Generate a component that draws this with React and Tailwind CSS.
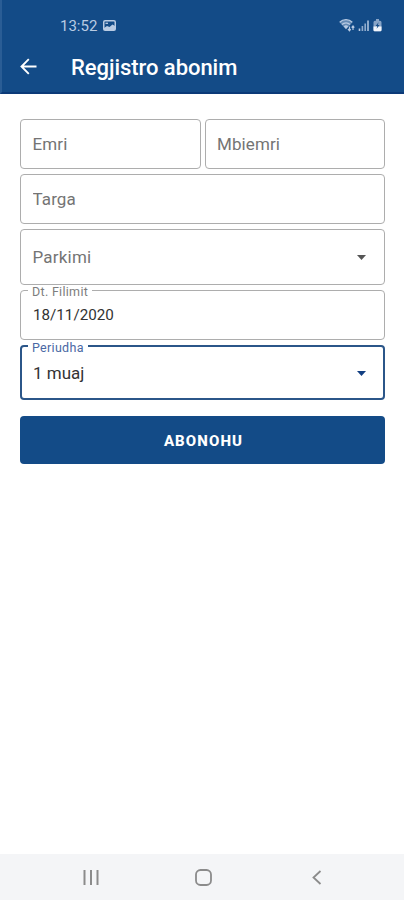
import React, { useState } from "react";

function StatusBar() {
  return (
    <div className="flex h-[42px] items-start justify-between pl-[60px] pr-[20px] pt-[17px] text-[#b9cbe3]">
      <div className="flex items-center gap-[6px]">
        <span className="text-[15px] leading-[18px]">13:52</span>
        <svg className="-mt-px h-[11px] w-[13px]" viewBox="0 0 13 11" fill="none">
          <rect x="0.75" y="0.75" width="11.5" height="9.5" rx="1.3" stroke="currentColor" strokeWidth="1.5" />
          <path d="M1 10V8l3-2 2.5 1L9.5 4.5 12 6v4z" fill="currentColor" />
          <path d="M2.500 3.300h2.500" stroke="currentColor" strokeWidth="1.300" />
        </svg>
      </div>

      {/* Wifi, signal and battery */}
      <svg className="mt-px h-[14px] w-[46px]" viewBox="0 0 46 14" fill="none">
        <path d="M1.5 4.2a9 9 0 0 1 13 0L8 11.5z" fill="currentColor" opacity="0.5" />
        <path d="M1.7 4.2a8.9 8.9 0 0 1 12.6 0" stroke="currentColor" strokeWidth="1.3" />
        <path d="M4 6.5a5.6 5.6 0 0 1 8 0" stroke="currentColor" strokeWidth="1.2" />
        <path d="M5.7 8.3a3.5 3.5 0 0 1 4.6 0L8 11z" fill="currentColor" />
        <path d="M11.5 8.5v4M10 11l1.5 1.7 1.2-1.5M15 12V8.3M13.6 9.7 15 8l1.3 1.7" stroke="currentColor" strokeWidth="1.2" />
        <path d="M21.500 10.500V13" stroke="currentColor" strokeWidth="1.600" />
        <path d="M24.400 8v5M27.200 5.500V13" stroke="currentColor" strokeWidth="1.600" opacity="0.75" />
        <path d="M30 2.500V13" stroke="currentColor" strokeWidth="1.500" />
        <path d="M38 1h3v1.700h1q1.500 0 1.500 1.500V12q0 1.200-1.200 1.200h-5.600q-1.200 0-1.200-1.200V4.200q0-1.500 1.500-1.500h1z" fill="currentColor" opacity="0.7" />
        <path d="M35.500 8.500h8V12q0 1.200-1.200 1.200h-5.600q-1.200 0-1.200-1.200z" fill="#f1f5fb" />
        <path d="m40.600 4.200-3 3.800h1.700l-.7 2.800 3-3.800h-1.800z" fill="#134b87" />
      </svg>
    </div>
  );
}

function AppBar() {
  return (
    <div className="flex h-[50px] items-center">
      <button className="-mt-[2px] ml-[20px] mr-[34px]">
        <svg className="h-[17px] w-[17px]" viewBox="0 0 17 17" fill="none" stroke="#fff" strokeWidth="1.9">
          <path d="M16.5 8.5H2M8.8 1.2 1.5 8.5l7.3 7.3" />
        </svg>
      </button>
      <h1 className="mt-[2px] text-[22px] font-medium leading-[28px] tracking-[-0.05px] text-white">
        Regjistro abonim
      </h1>
    </div>
  );
}

function TextField({ placeholder }) {
  const [value, setValue] = useState("");

  return (
    <input
      type="text"
      value={value}
      onChange={(e) => setValue(e.target.value)}
      placeholder={placeholder}
      className="h-full w-full min-w-0 rounded-[4px] border border-[#adadad] bg-white px-[11.5px] text-[17px] tracking-[0.1px] text-[#333] outline-none placeholder:text-[#747474]"
    />
  );
}

function Caret() {
  return (
    <svg className="h-[5px] w-[9px]" viewBox="0 0 9 5" fill="currentColor">
      <path d="M0 0h9L4.5 5z" />
    </svg>
  );
}

export default function App() {
  return (
    <div className="flex h-[900px] w-full flex-col bg-white font-['Roboto',sans-serif]">
      <header className="h-[94px] border-b-2 border-l-2 border-b-[#0c3a78] border-l-[#2a5d95] bg-[#134b87]">
        <div className="-ml-[2px]">
          <StatusBar />
          <AppBar />
        </div>
      </header>

      <form className="flex flex-1 flex-col pl-[20px] pr-[19px] pt-[25px]">
        <div className="grid h-[50px] grid-cols-2 gap-[4px]">
          <TextField placeholder="Emri" />
          <TextField placeholder="Mbiemri" />
        </div>

        <div className="mt-[5px] h-[50px]">
          <TextField placeholder="Targa" />
        </div>

        <div className="mt-[5px] flex h-[56px] items-center justify-between rounded-[4px] border border-[#adadad] pl-[11.5px] pr-[18px] text-[#555]">
          <span className="pt-[2px] text-[17px] tracking-[0.2px] text-[#747474]">Parkimi</span>
          <Caret />
        </div>

        {/* Date */}
        <div className="relative mt-[5px] flex h-[50px] items-center rounded-[4px] border border-[#adadad] pl-[12px]">
          <span className="absolute -top-[6px] left-[7px] bg-white px-[4px] text-[12.5px] leading-[14px] tracking-[0.3px] text-[#7d7d7d]">
            Dt. Filimit
          </span>
          <span className="pt-[1px] text-[15.2px] text-[#333]">18/11/2020</span>
        </div>

        {/* Period, focused */}
        <div className="relative mt-[5px] flex h-[55px] items-center justify-between rounded-[4px] border-2 border-[#2b5689] pl-[11px] pr-[17px] text-[#123f82]">
          <span className="absolute -top-[6px] left-[6px] bg-white px-[4px] text-[12.5px] leading-[14px] tracking-[0.3px] text-[#4a68a4]">
            Periudha
          </span>
          <span className="pt-[3px] text-[17px] text-[#333]">1 muaj</span>
          <span className="pt-[2px]">
            <Caret />
          </span>
        </div>

        <button
          type="button"
          className="mt-[16px] h-[48px] rounded-[4px] bg-[#134b87] pl-[2px] pt-[2px] text-[15px] font-extrabold tracking-[1.1px] text-white"
        >
          ABONOHU
        </button>
      </form>

      {/* System navigation */}
      <nav className="flex h-[46px] items-center justify-between bg-[#f4f5f7] pl-[83px] pr-[82px] pt-[1px] text-[#8b8b8b]">
        <svg className="h-[15px] w-[16px]" viewBox="0 0 16 15" fill="none" stroke="currentColor" strokeWidth="2">
          <path d="M1.500 0v15M8 0v15M14.500 0v15" />
        </svg>
        <svg className="-ml-[4px] h-[17px] w-[17px]" viewBox="0 0 17 17" fill="none" stroke="currentColor" strokeWidth="1.8">
          <rect x="1" y="1" width="15" height="15" rx="4.5" />
        </svg>
        <svg className="h-[15px] w-[10px]" viewBox="0 0 10 15" fill="none" stroke="currentColor" strokeWidth="1.8">
          <path d="M8.5 1 1.5 7.5l7 6.500" />
        </svg>
      </nav>
    </div>
  );
}
